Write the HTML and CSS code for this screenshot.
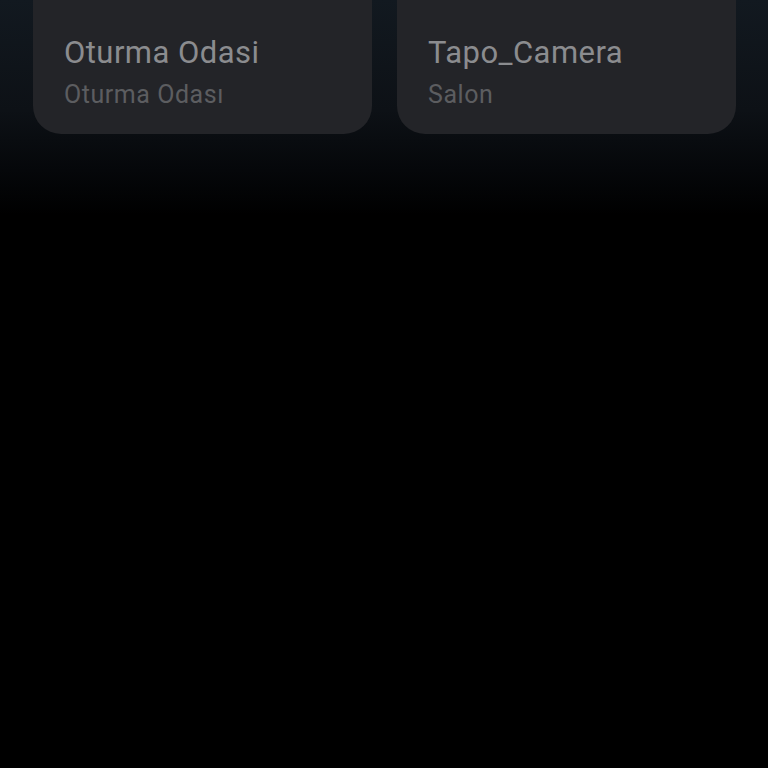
FILE: index.html
```html
<!DOCTYPE html>
<html lang="tr">
<head>
<meta charset="utf-8">
<link rel="stylesheet" href="styles.css">
</head>
<body>
<main class="screen">
  <section class="grid">
    <div class="card">
      <div class="title">Oturma Odasi</div>
      <div class="subtitle">Oturma Odası</div>
    </div>
    <div class="card">
      <div class="title">Tapo_Camera</div>
      <div class="subtitle">Salon</div>
    </div>
  </section>
</main>
</body>
</html>
```
FILE: styles.css
```css
html, body {
  margin: 0;
  padding: 0;
  background: #000;
}
.screen {
  width: 768px;
  height: 768px;
  background: linear-gradient(180deg, #121920 0px, #0d1116 110px, #05070a 170px, #000 215px, #000 100%);
  font-family: Roboto, "Noto Sans", sans-serif;
  overflow: hidden;
}
.grid {
  display: grid;
  grid-template-columns: 339px 339px;
  column-gap: 25px;
  padding: 0 32px 0 33px;
}
.card {
  background: #232428;
  border-radius: 0 0 28px 28px;
  padding: 35px 20px 24px 31px;
}
.title {
  font-size: 31px;
  line-height: 36px;
  letter-spacing: 0.45px;
  color: #8b8c8f;
}
.subtitle {
  margin-top: 9px;
  font-size: 25px;
  line-height: 30px;
  letter-spacing: 0.55px;
  color: #5c5d60;
}
```
